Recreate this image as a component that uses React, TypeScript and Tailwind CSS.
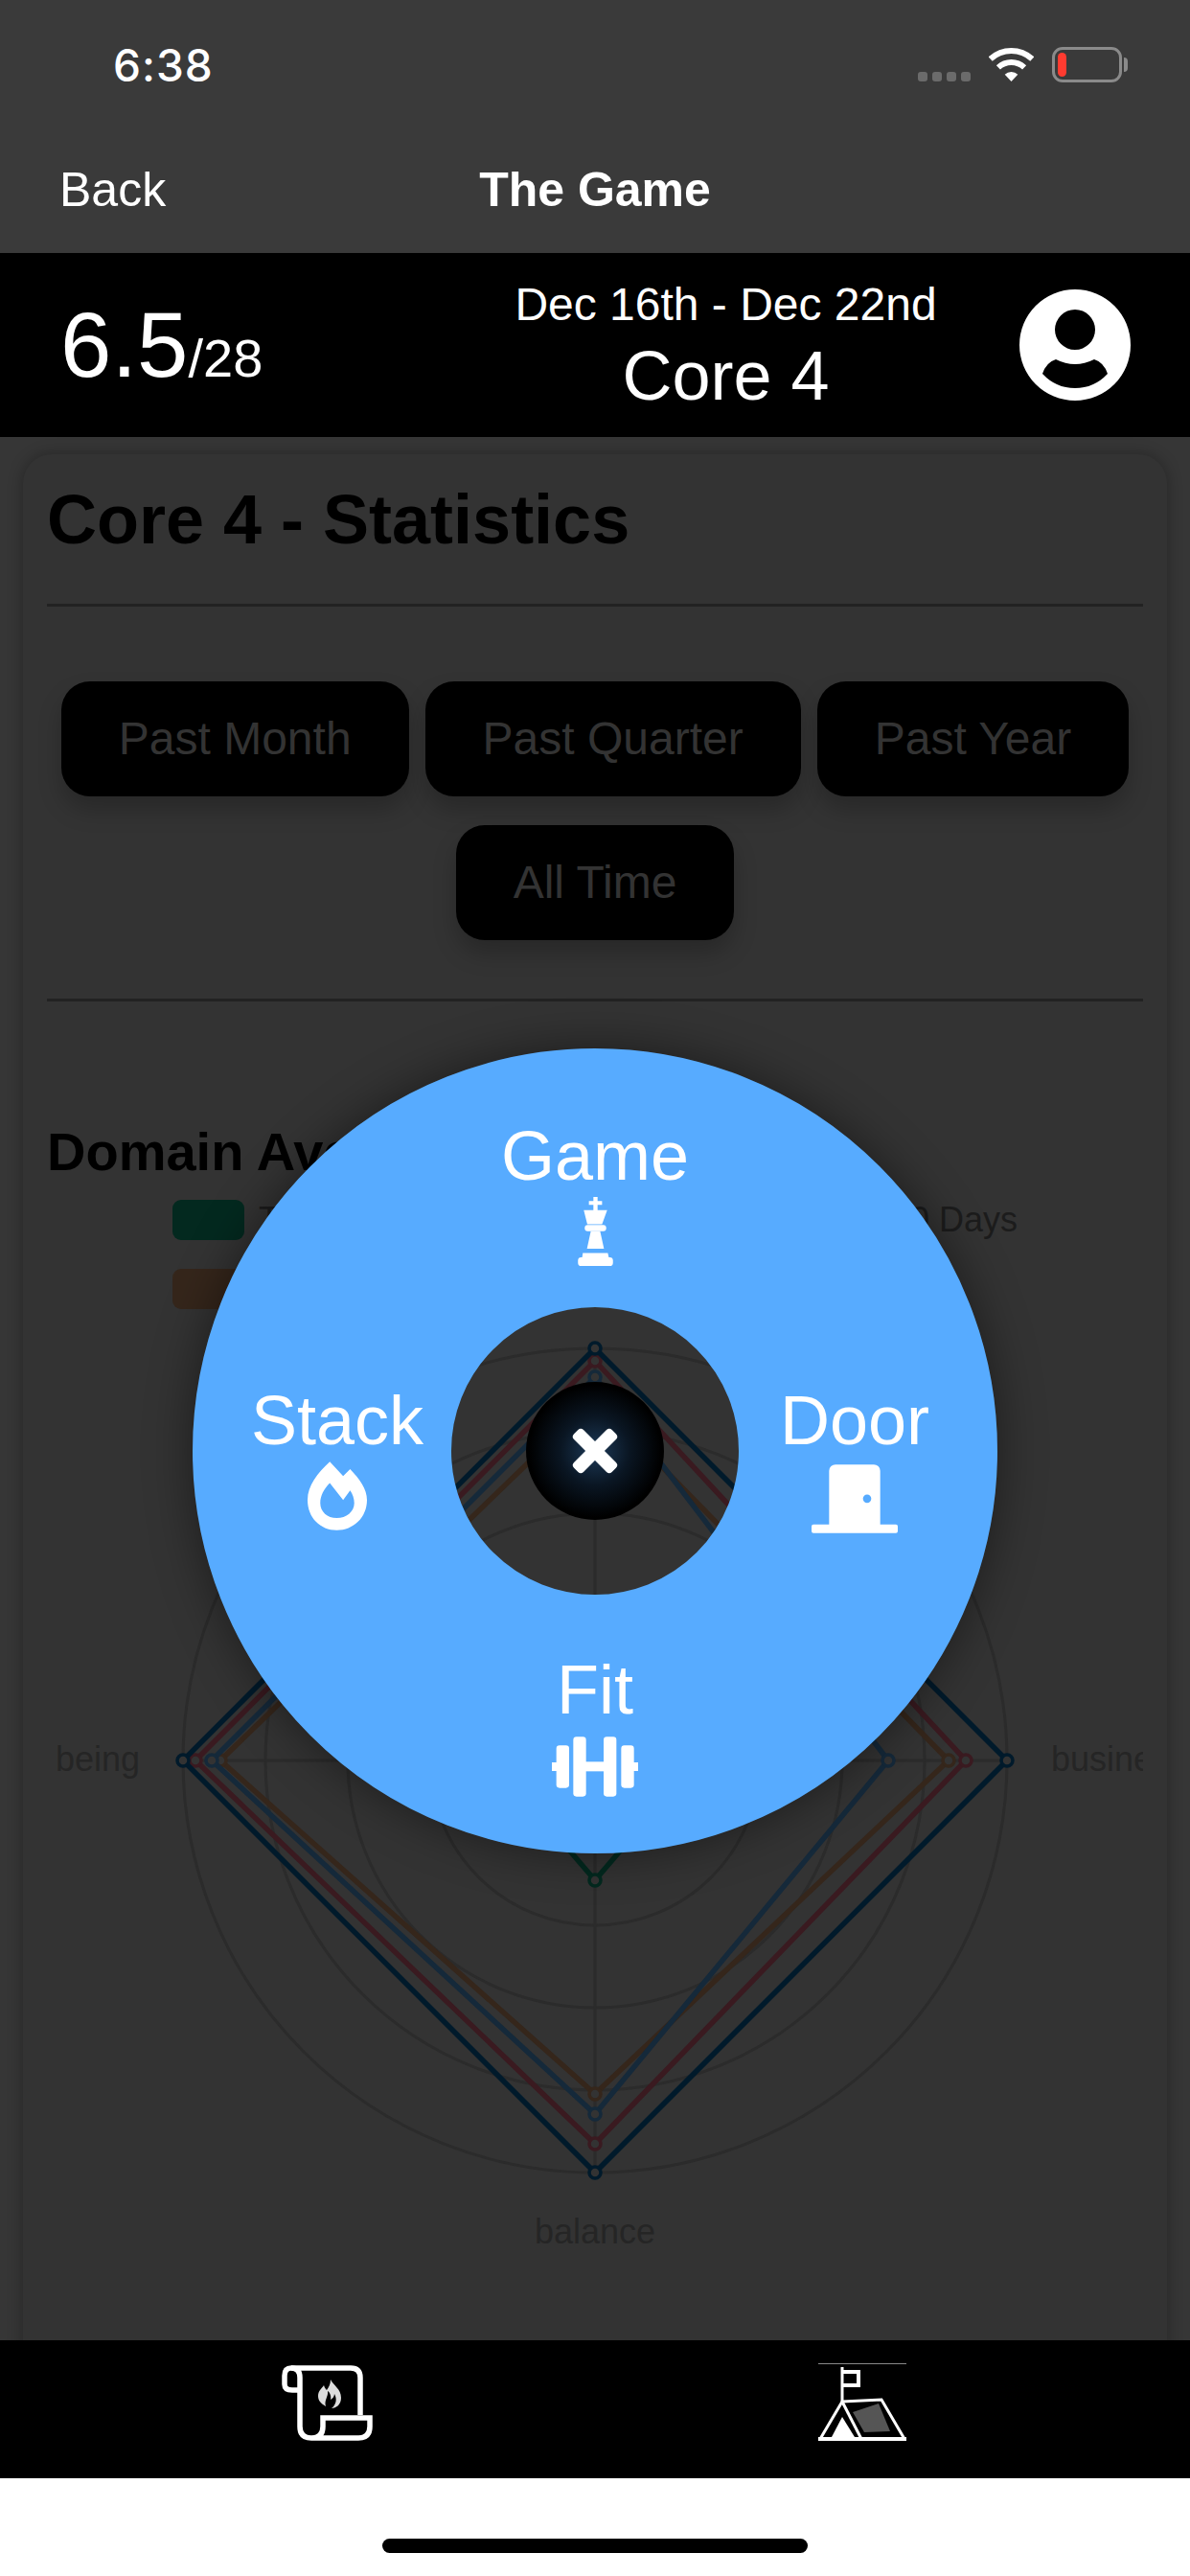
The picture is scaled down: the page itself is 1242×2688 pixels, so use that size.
import React from "react";

const CX = 572;
const CY = 466;

type Dataset = { color: string; r: [number, number, number, number] };

// top, right, bottom, left
const datasets: Dataset[] = [
  { color: "#03291f", r: [100, 107, 125, 107] },
  { color: "#35261b", r: [378, 369, 348, 391] },
  { color: "#15293a", r: [400, 306, 369, 400] },
  { color: "#3a1a20", r: [417, 387, 400, 417] },
  { color: "#001a2b", r: [430, 430, 430, 430] },
];

const points = (r: Dataset["r"]) => [
  [CX, CY - r[0]],
  [CX + r[1], CY],
  [CX, CY + r[2]],
  [CX - r[3], CY],
];

const RadarChart: React.FC = () => (
  <svg width="1144" height="1072" className="block mt-[5px] shrink-0">
    {[86, 172, 258, 344, 430].map((r) => (
      <circle key={r} cx={CX} cy={CY} r={r} fill="none" stroke="#2b2b2b" strokeWidth="3" />
    ))}
    <path d={`M${CX} ${CY - 430}V${CY + 430}M${CX - 430} ${CY}H${CX + 430}`} stroke="#2b2b2b" strokeWidth="3" />
    {datasets.map((d) => (
      <g key={d.color}>
        <polygon
          points={points(d.r).map((p) => p.join(",")).join(" ")}
          fill="none"
          stroke={d.color}
          strokeWidth="5.5"
        />
        {points(d.r).map((p, i) => (
          <circle key={i} cx={p[0]} cy={p[1]} r="6" fill="#333333" stroke={d.color} strokeWidth="3.5" />
        ))}
      </g>
    ))}
    <g fill="#252525" fontSize="36" fontFamily="'Liberation Sans', sans-serif" textAnchor="middle">
      <text x="53" y={CY + 11}>being</text>
      <text x={CX} y={CY + 504}>balance</text>
      <text x="1048" y={CY + 11} textAnchor="start">business</text>
    </g>
  </svg>
);

const StatusIcons: React.FC = () => (
  <div className="flex items-start mt-[49px]">
    <div className="flex gap-[5px] mt-[26px] mr-[19px]">
      <div className="w-[10px] h-[10px] rounded-[3px] bg-[#6b6b6b]" />
      <div className="w-[10px] h-[10px] rounded-[3px] bg-[#6b6b6b]" />
      <div className="w-[10px] h-[10px] rounded-[3px] bg-[#6b6b6b]" />
      <div className="w-[10px] h-[10px] rounded-[3px] bg-[#6b6b6b]" />
    </div>
    <svg width="47" height="36" viewBox="0 0 47 36" fill="none" className="mr-[19px]">
      <path d="M1.7 12.6a32 32 0 0 1 43.6 0" stroke="#fff" strokeWidth="6" />
      <path d="M9.9 21.4a20 20 0 0 1 27.2 0" stroke="#fff" strokeWidth="6" />
      <path d="M23.5 36L16.7 28.7a10 10 0 0 1 13.6 0z" fill="#fff" />
    </svg>
    <div className="relative flex items-center">
      <div className="w-[73px] h-[37px] rounded-[11px] border-[3px] border-[#8a8a8a] pl-[3px] py-[3px]">
        <div className="w-[9px] h-full rounded-full bg-[#ff3b30]" />
      </div>
      <div className="w-[4px] h-[15px] ml-[2px] rounded-r-full bg-[#8a8a8a]" />
    </div>
  </div>
);

const ProfileIcon: React.FC = () => (
  <svg width="116" height="116" viewBox="0 0 116 116" className="shrink-0">
    <path
      fillRule="evenodd"
      fill="#fff"
      d="M58 0a58 58 0 1 0 0 116a58 58 0 1 0 0-116zM58 21a21 21 0 1 1 0 42a21 21 0 1 1 0-42zM24 88Q38 103 58 103Q78 103 92 88Q88 76 78 73Q68 78 58 78Q48 78 38 73Q28 76 24 88z"
    />
  </svg>
);

const KingIcon: React.FC = () => (
  <svg width="37" height="72" viewBox="187 87 109 215" fill="#fff" className="block">
    <path d="M235 87h13v13h14v12h-14v16h30l-16 44h-46l-11-44h30v-16h-14v-12h14z" />
    <rect x="208" y="174" width="67" height="20" rx="9" />
    <path d="M227 194h29l12 54h-53z" />
    <path d="M202 262h78l3 13h3a10 10 0 0 1 10 10v7a10 10 0 0 1-10 10h-89a10 10 0 0 1-10-10v-7a10 10 0 0 1 10-10h3z" />
  </svg>
);

const FlameIcon: React.FC = () => (
  <svg width="62" height="72" viewBox="88 105 187 215" className="block">
    <path
      fill="#fff"
      fillRule="evenodd"
      d="M158 105L200 150L222 128C252 160 275 190 275 225C275 280 232 320 180 320C128 320 88 280 88 225C88 180 120 140 158 105ZM158 172C140 190 128 212 128 235C128 262 150 282 180 282C210 282 235 262 235 235C235 220 230 207 222 195L200 225Z"
    />
  </svg>
);

const DoorIcon: React.FC = () => (
  <svg width="90" height="72" viewBox="48 55 270 215" className="block">
    <path
      fill="#fff"
      fillRule="evenodd"
      d="M123 55H243A20 20 0 0 1 263 75V243H312A6 6 0 0 1 318 249V264A6 6 0 0 1 312 270H54A6 6 0 0 1 48 264V249A6 6 0 0 1 54 243H103V75A20 20 0 0 1 123 55ZM222 149A13 13 0 1 0 222 175A13 13 0 1 0 222 149Z"
    />
  </svg>
);

const BarbellIcon: React.FC = () => (
  <svg width="90" height="63" viewBox="48 95 270 187" fill="#fff" className="block">
    <rect x="48" y="175" width="20" height="27" />
    <rect x="298" y="175" width="20" height="27" />
    <rect x="62" y="122" width="40" height="133" rx="10" />
    <rect x="265" y="122" width="40" height="133" rx="10" />
    <rect x="115" y="95" width="40" height="187" rx="10" />
    <rect x="210" y="95" width="40" height="187" rx="10" />
    <rect x="150" y="173" width="65" height="30" />
  </svg>
);

const ScrollIcon: React.FC = () => (
  <svg width="95" height="79" viewBox="0 0 95 79" fill="none" stroke="#fff" strokeWidth="5.5" className="block">
    <path d="M10 3H72Q82 3 82 13V52" />
    <path d="M19 26H11Q3 26 3 20V11Q3 3 10 3Q19 3 19 13V64Q19 76 31 76Q43 76 43 64V55H92V64Q92 76 80 76H31" />
    <path
      fill="#ddd"
      stroke="none"
      d="M51 15C54 21 62 25 62 34C62 41 57 45 52 45C57 41 58 35 55 30C55 33 53 35 51 36C52 32 50 28 48 27C49 33 44 36 46 43C41 40 38 37 38 32C38 27 42 24 44 21C45 24 46 25 47 26C49 23 51 20 51 15Z"
    />
  </svg>
);

const TentIcon: React.FC = () => (
  <svg width="92" height="82" viewBox="0 0 92 82" fill="none" className="block">
    <path d="M0 .5H92" stroke="#888" strokeWidth="1" />
    <path d="M25 4V40" stroke="#fff" strokeWidth="3" />
    <path d="M26 9H42V23H26" stroke="#fff" strokeWidth="4" />
    <path d="M25 40L2 79H90L66 38L25 40" stroke="#fff" strokeWidth="3" />
    <path d="M25 40L45 79" stroke="#fff" strokeWidth="3" />
    <path d="M25 56L38 77H14z" fill="#fff" />
    <path d="M36 51L63 42L75 71L48 72z" fill="#555" />
    <path d="M0 79H92" stroke="#fff" strokeWidth="4" />
  </svg>
);

const btn =
  "h-[120px] px-[60px] flex items-center rounded-[30px] bg-black text-[48px] text-[#333] shadow-[0_14px_24px_rgba(0,0,0,0.22)]";

export default function App() {
  return (
    <div className="relative flex flex-col w-[1242px] h-[2688px] overflow-hidden bg-white font-['Liberation_Sans',Arial,sans-serif]">
      <div className="bg-[#3a3a3a] text-white h-[264px] shrink-0">
        <div className="flex justify-between h-[132px] pl-[118px] pr-[65px]">
          <span className="mt-[42px] h-[52px] text-[46px] leading-[52px] tracking-[1px] font-medium font-['Inter',sans-serif]">6:38</span>
          <StatusIcons />
        </div>
        <div className="relative flex items-center justify-center h-[132px]">
          <span className="absolute left-[62px] text-[50px]">Back</span>
          <span className="text-[50px] font-bold">The Game</span>
        </div>
      </div>

      <div className="flex items-center h-[192px] shrink-0 bg-black text-white pl-[63px]">
        <div className="w-[420px] flex items-baseline">
          <span className="text-[96px] leading-[110px]">6.5</span>
          <span className="text-[56px]">/28</span>
        </div>
        <div className="w-[549px] mr-[32px] mt-[2px] text-center">
          <div className="text-[48px] leading-[56px]">Dec 16th - Dec 22nd</div>
          <div className="text-[72px] leading-[80px] mt-[6px]">Core 4</div>
        </div>
        <ProfileIcon />
      </div>

      <div className="flex-1 min-h-0 bg-[#363636] px-[24px] pt-[18px] overflow-hidden">
        <div className="h-[2000px] rounded-t-[30px] bg-[#333333] px-[25px] pt-[28px] text-black shadow-[0_0_16px_rgba(0,0,0,0.3)]">
          <h1 className="text-[72px] leading-[80px] font-bold">Core 4 - Statistics</h1>
          <div className="h-[3px] mt-[48px] bg-[#222]" />
          <div className="flex flex-wrap justify-center gap-x-[17px] gap-y-[30px] mt-[78px]">
            <div className={btn}>Past Month</div>
            <div className={btn}>Past Quarter</div>
            <div className={btn}>Past Year</div>
            <div className={btn}>All Time</div>
          </div>
          <div className="h-[3px] mt-[61px] bg-[#222]" />
          <h2 className="text-[56px] leading-[60px] font-bold mt-[127px]">Domain Averages</h2>
          <div className="mt-[20px] pl-[131px] pr-[131px] text-[36px] leading-[42px] text-[#1c1c1c]">
            <div className="flex justify-between">
              <div className="flex gap-[15px]">
                <div className="w-[75px] h-[42px] rounded-[9px] bg-[#03291f]" />
                <span>This Week</span>
              </div>
              <span>Past 30 Days</span>
            </div>
            <div className="flex gap-[15px] mt-[30px]">
              <div className="w-[75px] h-[42px] rounded-[9px] bg-[#35261b]" />
              <span>Past Year</span>
            </div>
          </div>
          <RadarChart />
        </div>
      </div>

      <div className="flex justify-between h-[144px] shrink-0 bg-black pl-[294px] pr-[296px] pt-[24px]">
        <div className="pt-[2px]">
          <ScrollIcon />
        </div>
        <TentIcon />
      </div>
      <div className="flex justify-center h-[102px] shrink-0 bg-white pt-[63px]">
        <div className="w-[444px] h-[15px] rounded-full bg-black" />
      </div>

      {/* radial menu */}
      <div className="absolute left-[201px] top-[1094px] w-[840px] h-[840px] text-white text-[72px] leading-[80px]">
        <div className="absolute inset-0 rounded-full border-[270px] border-[#57abff] shadow-[0_0_50px_rgba(0,0,0,0.45)]" />
        <div className="absolute left-[0px] w-[840px] top-[72px] flex flex-col items-center">
          <span>Game</span>
          <div className="mt-[3px]">
            <KingIcon />
          </div>
        </div>
        <div className="absolute left-[51px] w-[200px] top-[348px] flex flex-col items-center">
          <span>Stack</span>
          <div className="mt-[3px]">
            <FlameIcon />
          </div>
        </div>
        <div className="absolute left-[591px] w-[200px] top-[348px] flex flex-col items-center">
          <span>Door</span>
          <div className="mt-[6px]">
            <DoorIcon />
          </div>
        </div>
        <div className="absolute left-[0px] w-[840px] top-[629px] flex flex-col items-center">
          <span>Fit</span>
          <div className="mt-[9px]">
            <BarbellIcon />
          </div>
        </div>
        <div className="absolute left-[348px] top-[348px] w-[144px] h-[144px] rounded-full flex items-center justify-center bg-[radial-gradient(circle,#1d3a58_0%,#0a1623_35%,#000000_68%)]">
          <svg width="50" height="50" viewBox="0 0 50 50" fill="#fff">
            <rect x="18" y="-3" width="14" height="56" rx="4" transform="rotate(45 25 25)" />
            <rect x="18" y="-3" width="14" height="56" rx="4" transform="rotate(-45 25 25)" />
          </svg>
        </div>
      </div>
    </div>
  );
}
